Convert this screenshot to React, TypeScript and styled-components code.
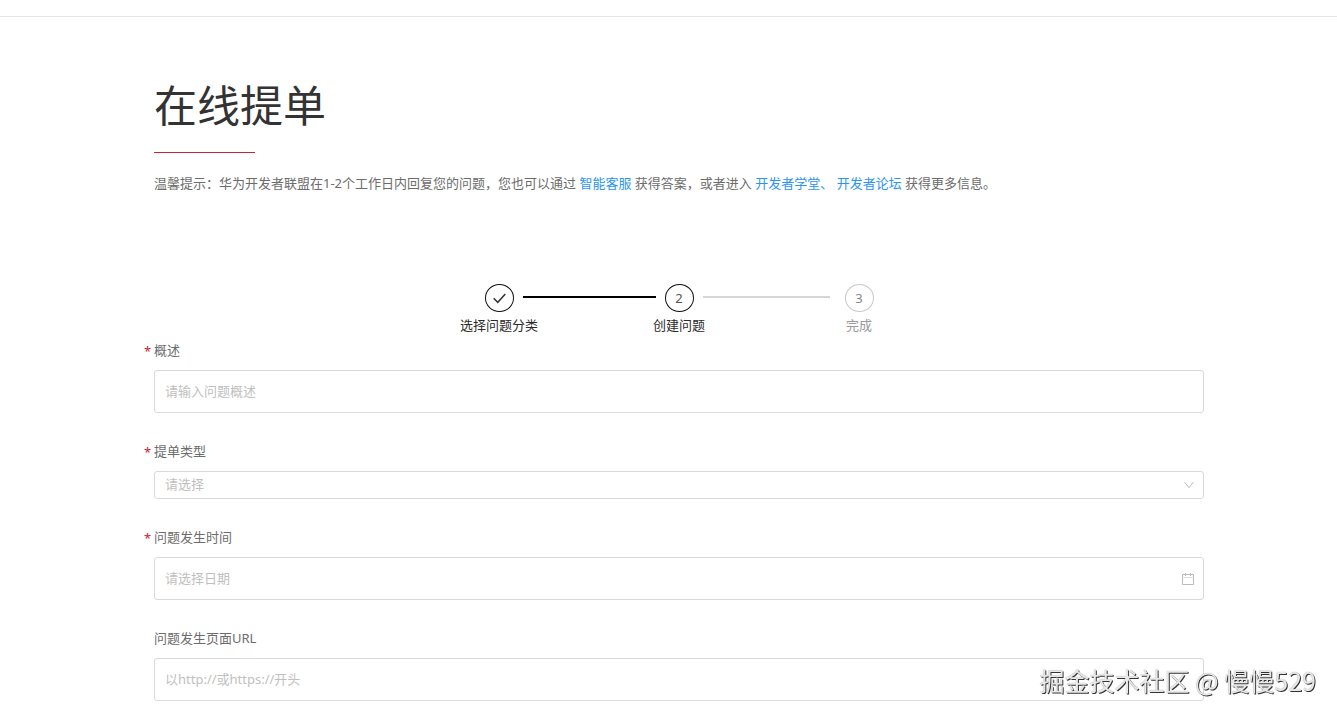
import React, { useState } from "react";
import styled, { createGlobalStyle } from "styled-components";

const GlobalStyle = createGlobalStyle`
  *, *::before, *::after { box-sizing: border-box; }
  body {
    margin: 0;
    background: #fff;
    color: #6c6c6c;
    font-family: "Noto Sans", "Noto Sans CJK SC", sans-serif;
    font-size: 13px;
    line-height: 20px;
  }
`;

const TopBar = styled.header`
  height: 17px;
  border-bottom: 1px solid #e6e6e6;
`;

const Page = styled.main`
  padding: 56px 133px 15px 154px;
`;

const Title = styled.h1`
  margin: 0;
  color: #333;
  font-family: "Noto Sans CJK SC", sans-serif;
  font-size: 43px;
  font-weight: 400;
  line-height: 60px;
`;

const TitleRule = styled.div`
  width: 101px;
  height: 1px;
  margin: 19px 0 20px;
  background: #c7243a;
`;

const Hint = styled.p`
  margin: 0;
`;

const HintLink = styled.a`
  color: #2b95f3;
  text-decoration: none;
`;

const Steps = styled.ol`
  display: grid;
  grid-template-columns: 29px 151px 29px 151px 29px;
  justify-content: center;
  margin: 91px 0 5px;
  padding: 0;
  list-style: none;
`;

const Step = styled.li<{ $reached: boolean }>`
  display: flex;
  flex-direction: column;
  align-items: center;
  gap: 3px;
  color: ${(p) => (p.$reached ? "#2a2a2a" : "#999")};
  white-space: nowrap;
`;

const StepCircle = styled.span<{ $reached: boolean }>`
  display: flex;
  align-items: center;
  justify-content: center;
  width: 29px;
  height: 28px;
  border: 1px solid ${(p) => (p.$reached ? "#111" : "#c8c8c8")};
  border-radius: 50%;
  color: ${(p) => (p.$reached ? "#555" : "#888")};
`;

const Connector = styled.li<{ $done: boolean }>`
  height: 2px;
  margin: 12px ${(p) => (p.$done ? 9 : 15)}px 0 9px;
  background: ${(p) => (p.$done ? "#000" : "#d6d6d6")};
`;

const Form = styled.form`
  display: flex;
  flex-direction: column;
  gap: 28px;
`;

const FieldGroup = styled.div`
  display: flex;
  flex-direction: column;
  gap: 10px;
`;

const Label = styled.label<{ $required?: boolean }>`
  position: relative;
  align-self: flex-start;

  &::before {
    content: ${(p) => (p.$required ? '"*"' : "none")};
    position: absolute;
    top: 1px;
    left: -10px;
    color: #c7243a;
  }
`;

const ControlBox = styled.div<{ $compact?: boolean }>`
  display: flex;
  align-items: center;
  height: ${(p) => (p.$compact ? 28 : 43)}px;
  padding-right: 8px;
  border: 1px solid #d9d9d9;
  border-radius: 3px;

  &:focus-within { border-color: #999; }

  svg { flex: none; pointer-events: none; }
`;

const TextInput = styled.input`
  flex: 1;
  min-width: 0;
  height: 100%;
  padding: 0 10px 2px;
  border: 0;
  outline: 0;
  background: transparent;
  color: #333;
  font: inherit;

  &::placeholder { color: #bfbfbf; opacity: 1; }
`;

const SelectInput = styled.select<{ $empty: boolean }>`
  flex: 1;
  min-width: 0;
  height: 100%;
  margin-right: -20px;
  padding: 0 30px 2px 10px;
  appearance: none;
  border: 0;
  outline: 0;
  background: transparent;
  color: ${(p) => (p.$empty ? "#bfbfbf" : "#333")};
  font: inherit;
`;

const Watermark = styled.div`
  position: fixed;
  right: 21px;
  bottom: 18px;
  color: #e8e8e8;
  font-family: "Noto Sans CJK SC", sans-serif;
  font-size: 25px;
  line-height: 36px;
  text-shadow: 1px 1px 0 #333, 0 0 1px #999;
  pointer-events: none;
`;

const CheckIcon = () => (
  <svg width="13" height="11" viewBox="0 0 13 11" fill="none" stroke="#333" strokeWidth="1.5" aria-hidden="true">
    <path d="M.7 5.2 4.8 9.3 12.3.9" />
  </svg>
);

const ChevronIcon = () => (
  <svg width="12" height="12" viewBox="0 0 12 12" fill="none" stroke="#bbb" aria-hidden="true">
    <path d="M1.5 3 6 8.7 10.5 3" />
  </svg>
);

const CalendarIcon = () => (
  <svg width="14" height="14" viewBox="0 0 14 14" fill="none" stroke="#bbb" aria-hidden="true">
    <path d="M1.5 2.5h11v10h-11zM4.5 1v3M9.5 1v3" />
    <path d="M1.5 5.5h11" stroke="#ddd" />
  </svg>
);

export default function App() {
  const [kind, setKind] = useState("");

  return (
    <>
      <GlobalStyle />
      <TopBar />
      <Page>
        <Title>在线提单</Title>
        <TitleRule />
        <Hint>
          温馨提示：华为开发者联盟在1-2个工作日内回复您的问题，您也可以通过 <HintLink href="#service">智能客服</HintLink>{" "}
          获得答案，或者进入 <HintLink href="#academy">开发者学堂、</HintLink>{" "}
          <HintLink href="#forum">开发者论坛</HintLink> 获得更多信息。
        </Hint>

        <Steps>
          <Step $reached>
            <StepCircle $reached><CheckIcon /></StepCircle>
            选择问题分类
          </Step>
          <Connector $done aria-hidden="true" />
          <Step $reached aria-current="step">
            <StepCircle $reached>2</StepCircle>
            创建问题
          </Step>
          <Connector $done={false} aria-hidden="true" />
          <Step $reached={false}>
            <StepCircle $reached={false}>3</StepCircle>
            完成
          </Step>
        </Steps>

        <Form>
          <FieldGroup>
            <Label $required htmlFor="summary">概述</Label>
            <ControlBox>
              <TextInput id="summary" type="text" placeholder="请输入问题概述" />
            </ControlBox>
          </FieldGroup>
          <FieldGroup>
            <Label $required htmlFor="kind">提单类型</Label>
            <ControlBox $compact>
              <SelectInput id="kind" $empty={!kind} value={kind} onChange={(e) => setKind(e.target.value)}>
                <option value="">请选择</option>
              </SelectInput>
              <ChevronIcon />
            </ControlBox>
          </FieldGroup>
          <FieldGroup>
            <Label $required htmlFor="date">问题发生时间</Label>
            <ControlBox>
              <TextInput id="date" type="text" placeholder="请选择日期" />
              <CalendarIcon />
            </ControlBox>
          </FieldGroup>
          <FieldGroup>
            <Label htmlFor="url">问题发生页面URL</Label>
            <ControlBox>
              <TextInput id="url" type="url" placeholder="以http://或https://开头" />
            </ControlBox>
          </FieldGroup>
        </Form>
      </Page>
      <Watermark>掘金技术社区 @ 慢慢529</Watermark>
    </>
  );
}
